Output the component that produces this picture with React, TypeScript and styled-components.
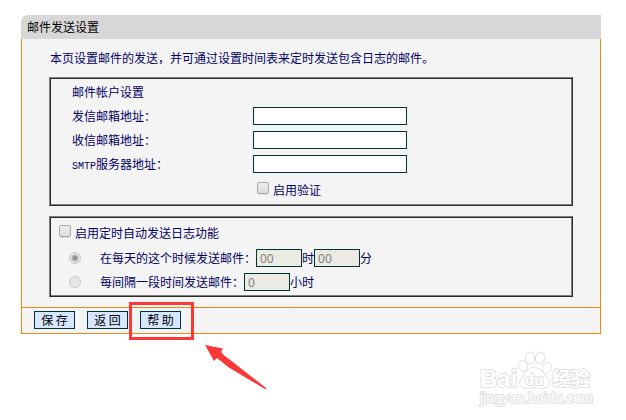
import React from 'react';
import styled, { createGlobalStyle } from 'styled-components';

const GlobalStyle = createGlobalStyle`
  *, *::before, *::after { box-sizing: border-box; }
  body {
    margin: 0;
    background: #fff;
    color: #000066;
    font: 12px/24px "Noto Sans CJK SC", sans-serif;
  }
`;

const Page = styled.main`
  position: relative;
  min-height: 100vh;
  padding: 15px 25px 0 21px;
`;

const Header = styled.h1`
  margin: 0;
  padding: 0 6px;
  height: 24px;
  border-top-left-radius: 7px;
  background: #d7d7d7;
  color: #000;
  font-size: 12px;
  font-weight: 400;
  line-height: 24px;
`;

const Panel = styled.form`
  border: 1px solid #e98a1c;
  border-top: 0;
  background: #f4f4f4;
`;

const Content = styled.div`
  display: flex;
  flex-direction: column;
  gap: 10px;
  padding: 7px 27px 10px;
`;

const Intro = styled.p`
  margin: 0;
  padding: 0 1px;
  height: 21px;
`;

const Group = styled.section`
  border: 1px solid;
  border-color: #808080 #2c2c2c #2c2c2c #808080;
  box-shadow: inset 1px 1px #2c2c2c, inset -1px -1px #808080;
`;

const AccountGroup = styled(Group)`
  padding: 2px 22px 1px;
`;

const GroupTitle = styled.h2`
  margin: 0;
  font-size: 12px;
  font-weight: 400;
  line-height: 24px;
`;

const FieldRow = styled.div`
  display: grid;
  grid-template-columns: 181px 154px;
  grid-template-rows: 24px;
  align-items: center;
`;

const Latin = styled.span`
  font-family: "Liberation Mono", monospace;
  font-size: 10px;
  line-height: 1;
`;

const TextField = styled.input`
  width: 100%;
  height: 18px;
  padding: 0 4px;
  border: 1px solid #003333;
  border-radius: 0;
  background: #fff;
  color: #000066;
  font: 12px "Noto Sans", sans-serif;
`;

const NumberField = styled(TextField)`
  flex: none;
  width: 46px;
  padding: 0 3px;

  &:disabled {
    background: #ebebe4;
    color: #808080;
    opacity: 1;
  }
`;

const CheckLine = styled.label`
  display: flex;
  align-items: center;
  gap: 4px;
  height: 26px;
`;

const VerifyLine = styled(CheckLine)`
  height: 28px;
  margin-left: 185px;
`;

const CheckBox = styled.input`
  appearance: none;
  width: 12px;
  height: 12px;
  margin: 0 0 4px;
  border: 1px solid #a9a9a9;
  border-radius: 2px;
  background: linear-gradient(#eeeeee, #dcdcdc);
  box-shadow: 0 1px #e0e0e0;

  &:checked { background: #000066; }
`;

const ScheduleGroup = styled(Group)`
  padding: 3px 9px 2px;
`;

const ModeRow = styled.div`
  display: flex;
  align-items: center;
  height: 24px;
  padding-left: 10px;
`;

const Radio = styled.input`
  appearance: none;
  flex: none;
  width: 12px;
  height: 12px;
  margin: 0 19px 0 0;
  border: 1px solid #c8c8c8;
  border-radius: 50%;
  background: #e6e6e6;

  &:checked {
    background: radial-gradient(circle, #969696 0 2px, #e6e6e6 4px);
  }
`;

const ModeLabel = styled.label<{ $chars: number }>`
  flex: none;
  width: ${({ $chars }) => $chars * 12}px;
`;

const Actions = styled.footer`
  display: flex;
  gap: 12px;
  padding: 3px 12px 4px;
  border-top: 1px solid #e98a1c;
`;

const Highlighted = styled.div`
  position: relative;
`;

const HighlightFrame = styled.div`
  position: absolute;
  inset: -9px -13px -11px -11px;
  border: 3px solid #fb3737;
  pointer-events: none;
`;

const Pointer = styled.svg`
  position: absolute;
  left: 65px;
  top: 34px;
  width: 62px;
  height: 46px;
  fill: #fb3737;
  pointer-events: none;
`;

const Button = styled.button`
  display: flex;
  justify-content: center;
  align-items: center;
  width: 41px;
  height: 18px;
  padding: 0;
  border: 1px solid #003333;
  border-radius: 0;
  background: #d6e7ff;
  color: #000;
  font: 12px/16px "Noto Sans CJK SC", sans-serif;
`;

const Watermark = styled.svg`
  position: absolute;
  right: 28px;
  bottom: 8px;
  width: 122px;
  height: 64px;
  fill: #fff;
  stroke: #e2e2e2;
  stroke-width: 2;
  stroke-linejoin: round;
  paint-order: stroke;
  font-family: "Liberation Sans", "Noto Sans CJK SC", sans-serif;
  pointer-events: none;
`;

const addressFields = [
  { id: 'sender', prefix: '', label: '发信邮箱地址：' },
  { id: 'receiver', prefix: '', label: '收信邮箱地址：' },
  { id: 'smtp', prefix: 'SMTP', label: '服务器地址：' },
];

export default function App() {
  return (
    <>
      <GlobalStyle />
      <Page>
        <Header>邮件发送设置</Header>
        <Panel onSubmit={(e: React.FormEvent) => e.preventDefault()}>
          <Content>
            <Intro>本页设置邮件的发送，并可通过设置时间表来定时发送包含日志的邮件。</Intro>
            <AccountGroup>
              <GroupTitle>邮件帐户设置</GroupTitle>
              {addressFields.map(({ id, prefix, label }) => (
                <FieldRow key={id}>
                  <label htmlFor={id}>
                    {prefix && <Latin>{prefix}</Latin>}
                    {label}
                  </label>
                  <TextField id={id} type="text" />
                </FieldRow>
              ))}
              <VerifyLine>
                <CheckBox type="checkbox" />
                启用验证
              </VerifyLine>
            </AccountGroup>
            <ScheduleGroup>
              <CheckLine>
                <CheckBox type="checkbox" />
                启用定时自动发送日志功能
              </CheckLine>
              <ModeRow>
                <Radio id="daily" name="mode" type="radio" defaultChecked disabled />
                <ModeLabel htmlFor="daily" $chars={13}>在每天的这个时候发送邮件：</ModeLabel>
                <NumberField aria-label="时" type="text" defaultValue="00" disabled />
                时
                <NumberField aria-label="分" type="text" defaultValue="00" disabled />
                分
              </ModeRow>
              <ModeRow>
                <Radio id="interval" name="mode" type="radio" disabled />
                <ModeLabel htmlFor="interval" $chars={12}>每间隔一段时间发送邮件：</ModeLabel>
                <NumberField aria-label="小时" type="text" defaultValue="0" disabled />
                小时
              </ModeRow>
            </ScheduleGroup>
          </Content>
          <Actions>
            <Button type="submit">保 存</Button>
            <Button type="button">返 回</Button>
            <Highlighted>
              <Button type="button">帮 助</Button>
              <HighlightFrame />
              <Pointer viewBox="0 0 62 46" aria-hidden="true">
                <path d="M0 0 18 3.5 16 7 Q19 11 24 14 L61 43 Q62 45 60 44 L23 22 Q16 16 12 13 L9 16Z" />
              </Pointer>
            </Highlighted>
          </Actions>
        </Panel>
        <Watermark viewBox="0 0 122 64">
          <text x="4" y="39" fontSize="24" fontWeight="700">Bai</text>
          <ellipse cx="47" cy="18" rx="4" ry="5" transform="rotate(-15 47 18)" />
          <ellipse cx="54" cy="10" rx="4" ry="5.5" />
          <ellipse cx="64" cy="10" rx="4" ry="5.5" transform="rotate(14 64 10)" />
          <ellipse cx="71" cy="20" rx="4" ry="5" transform="rotate(15 71 20)" />
          <path d="M58 20c-7 0-8 6-12 10-4 5-1 10 5 10 5-1 10-1 15 0 6 0 9-5 5-10-4-4-6-10-13-10Z" />
          <text x="49" y="37" fontSize="15" fontWeight="700">du</text>
          <text x="76" y="38" fontSize="19" fontWeight="700">经验</text>
          <text x="4" y="55" fontSize="14">jingyan.baidu.com</text>
        </Watermark>
      </Page>
    </>
  );
}
